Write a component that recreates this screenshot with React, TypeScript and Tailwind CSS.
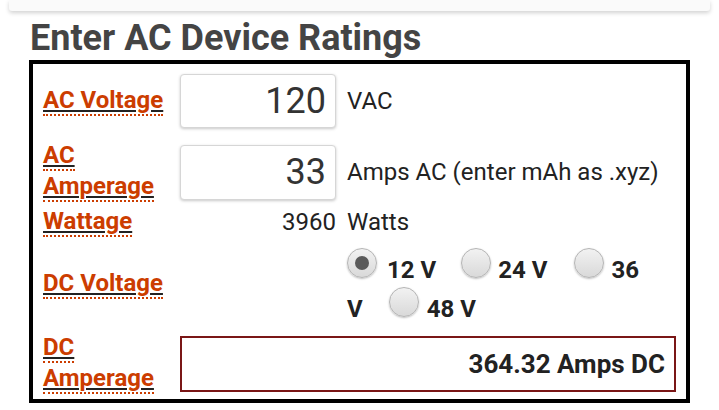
import React from "react";

const labelCls =
  "font-bold text-[24px] leading-[29px] text-[#cc3d00] underline decoration-[#222] decoration-2 underline-offset-[2px] border-b-2 border-dotted border-[#cc3d00]";

function Label({ lines }: { lines: string[] }) {
  return (
    <div className="whitespace-nowrap leading-[29px]">
      {lines.map((l, i) => (
        <React.Fragment key={l}>
          <a href="#" className={labelCls}>
            {l}
          </a>
          {i < lines.length - 1 && <br />}
        </React.Fragment>
      ))}
    </div>
  );
}

function Radio({ checked }: { checked?: boolean }) {
  return (
    <span className="relative inline-block w-[30px] h-[30px] rounded-full border border-[#b5b5b5] bg-gradient-to-b from-[#f2f2f2] to-[#d9d9d9] shadow-[0_1px_2px_rgba(0,0,0,0.25)]">
      {checked && (
        <span className="absolute left-[7px] top-[7px] w-[14px] h-[14px] rounded-full bg-[#5a5a5a]" />
      )}
    </span>
  );
}

export default function App() {
  return (
    <div className="w-[719px] h-[410px] bg-white overflow-hidden font-['Roboto',sans-serif] text-[#222]">
      {/* top card */}
      <div className="mx-[9px] h-[11px] bg-[#fafafa] rounded-b-[3px] shadow-[0_2px_4px_rgba(0,0,0,0.18)]" />

      <h2 className="mt-[7px] mb-[2px] h-[40px] pl-[30px] text-[36px] leading-[40px] font-bold text-[#444] whitespace-nowrap">
        Enter AC Device Ratings
      </h2>

      <div className="ml-[29px] w-[661px] border-4 border-black pl-[10px] pr-[10px] pt-[10px] pb-[10px]">
        {/* AC Voltage */}
        <div className="grid grid-cols-[126px_156px_1fr] gap-x-[11px] h-[54px] items-center">
          <Label lines={["AC Voltage"]} />
          <div className="h-[54px] border border-[#d6d6d6] rounded-[4px] bg-white shadow-[0_1px_3px_rgba(0,0,0,0.22)] flex items-center justify-end pr-[9px] text-[36px] text-[#333]">
            120
          </div>
          <div className="text-[24px]">VAC</div>
        </div>

        {/* AC Amperage */}
        <div className="mt-[13px] grid grid-cols-[126px_156px_1fr] gap-x-[11px] h-[55px] items-center">
          <Label lines={["AC", "Amperage"]} />
          <div className="h-[55px] border border-[#d6d6d6] rounded-[4px] bg-white shadow-[0_1px_3px_rgba(0,0,0,0.22)] flex items-center justify-end pr-[9px] text-[36px] text-[#333]">
            33
          </div>
          <div className="text-[24px] whitespace-nowrap">Amps AC (enter mAh as .xyz)</div>
        </div>

        {/* Wattage */}
        <div className="mt-[7px] grid grid-cols-[126px_156px_1fr] gap-x-[11px] h-[38px] items-center">
          <Label lines={["Wattage"]} />
          <div className="text-right text-[24px]">3960</div>
          <div className="text-[24px]">Watts</div>
        </div>

        {/* DC Voltage */}
        <div className="mt-[7px] grid grid-cols-[126px_156px_1fr] gap-x-[11px] items-center">
          <Label lines={["DC Voltage"]} />
          <div />
          <div className="flex flex-col gap-[5px] text-[24px] font-bold leading-[24px]">
            <div className="flex items-baseline">
              <Radio checked />
              <span className="ml-[10px]">12 V</span>
              <span className="ml-[25px]" />
              <Radio />
              <span className="ml-[7px]">24 V</span>
              <span className="ml-[27px]" />
              <Radio />
              <span className="ml-[7px]">36</span>
            </div>
            <div className="flex items-baseline">
              <span>V</span>
              <span className="ml-[26px]" />
              <Radio />
              <span className="ml-[8px]">48 V</span>
            </div>
          </div>
        </div>

        {/* DC Amperage */}
        <div className="mt-[12px] grid grid-cols-[126px_156px_1fr] gap-x-[11px] h-[56px] items-center">
          <Label lines={["DC", "Amperage"]} />
          <div className="col-span-2 h-[56px] border-2 border-[#7a1616] flex items-center justify-end pr-[9px] text-[26px] font-bold">
            364.32 Amps DC
          </div>
        </div>
      </div>
    </div>
  );
}
